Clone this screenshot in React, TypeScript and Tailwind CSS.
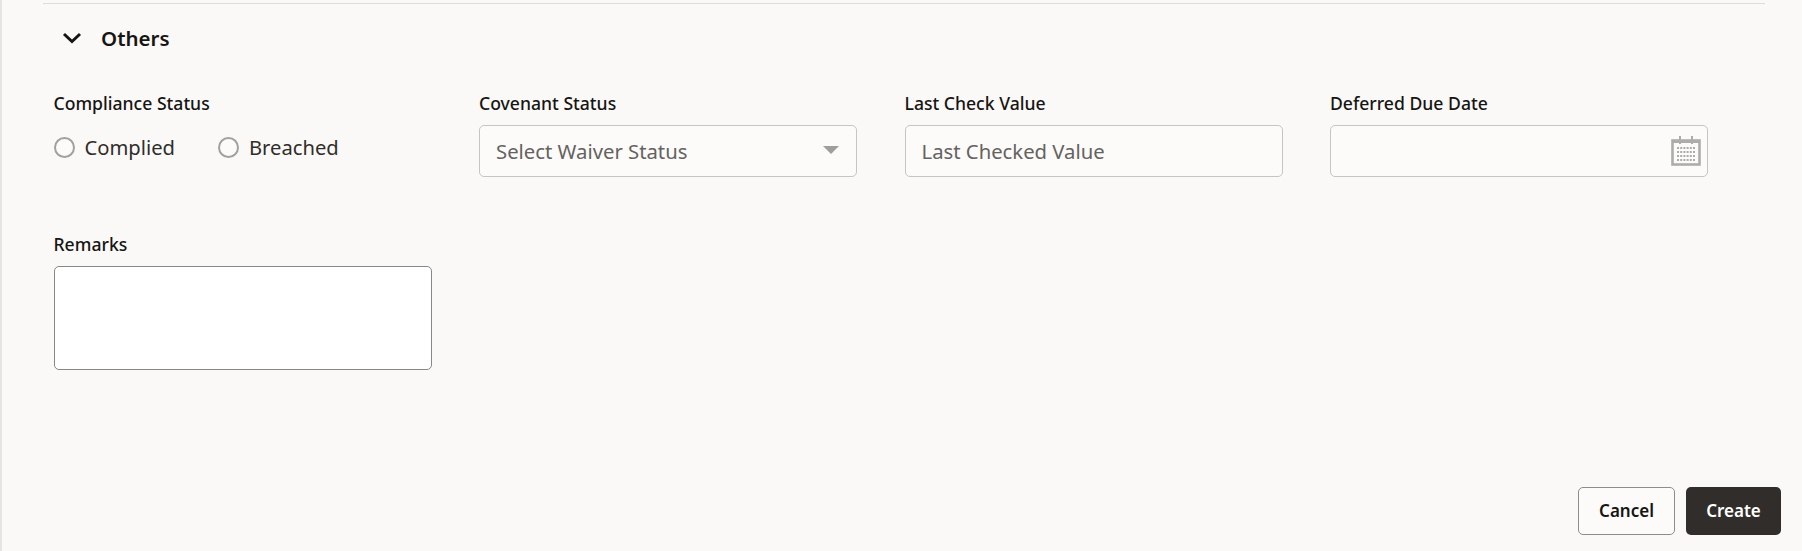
import React from 'react';

const font = "[font-family:'Noto_Sans','Open_Sans',sans-serif]";

const Label: React.FC<{ text: string }> = ({ text }) => (
  <div className="h-[22px] text-[17.6px] leading-[22px] font-medium text-[#161513]">{text}</div>
);

const Radio: React.FC<{ text: string }> = ({ text }) => (
  <label className="flex items-center gap-[10px]">
    <span className="size-[21px] rounded-full border-2 border-[#a3a09c] bg-[#fcfbfa]" />
    <span className="text-[20.2px] leading-[28px] text-[#312d2a]">{text}</span>
  </label>
);

const CalendarIcon = () => (
  <svg width="30" height="30" viewBox="0 0 30 30" className="text-[#aeaca9]">
    <rect x="1.5" y="4.5" width="27" height="24" fill="none" stroke="currentColor" strokeWidth="2.6" />
    <rect x="1" y="4" width="28" height="3" fill="currentColor" />
    <rect x="8" y="0" width="2" height="8" fill="currentColor" />
    <rect x="20" y="0" width="2" height="8" fill="currentColor" />
    <path d="M6 12h18M6 16h18M6 20h18M6 24h18" stroke="currentColor" strokeWidth="2" strokeDasharray="2 1.2" fill="none" />
  </svg>
);

const App: React.FC = () => {
  return (
    <div className={`h-[551px] w-[1802px] overflow-hidden border-l-2 border-[#e6e4e1] bg-[#faf9f7] ${font}`}>
      <div className="ml-[41px] mr-[37px] mt-[3px] border-t border-[#dfdddb] pt-[18px]">
        <div className="flex h-[32px] items-center pl-[19px]">
          <svg width="20" height="12" viewBox="0 0 20 12" fill="none" stroke="#161513" strokeWidth="3">
            <path d="M2 2l8 7.5L18 2" />
          </svg>
          <span className="ml-[19px] text-[20.5px] leading-[32px] font-semibold text-[#161513]">Others</span>
        </div>

        <div className="mt-[38px] grid grid-cols-[repeat(4,378px)] gap-x-[47.5px] pl-[10.5px]">
          <div>
            <Label text="Compliance Status" />
            <div className="mt-[19px] flex gap-[43px]">
              <Radio text="Complied" />
              <Radio text="Breached" />
            </div>
          </div>
          <div>
            <Label text="Covenant Status" />
            <div className="mt-[11px] flex h-[52px] items-center justify-between rounded-[5px] border border-[#c7c5c2] bg-[#fcfbfa] pl-[16px] pr-[17px]">
              <span className="text-[20.3px] text-[#65625f]">Select Waiver Status</span>
              <span className="mb-[3px] h-0 w-0 border-x-[8px] border-t-[8px] border-x-transparent border-t-[#a09e9b]" />
            </div>
          </div>
          <div>
            <Label text="Last Check Value" />
            <div className="mt-[11px] flex h-[52px] items-center rounded-[5px] border border-[#c7c5c2] bg-[#fcfbfa] pl-[16px]">
              <span className="text-[20.3px] text-[#65625f]">Last Checked Value</span>
            </div>
          </div>
          <div>
            <Label text="Deferred Due Date" />
            <div className="mt-[11px] flex h-[52px] items-center justify-end rounded-[5px] border border-[#c7c5c2] bg-[#fcfbfa] pr-[6px]">
              <CalendarIcon />
            </div>
          </div>
        </div>

        <div className="mt-[56px] pl-[10.5px]">
          <Label text="Remarks" />
          <div className="mt-[11px] h-[104px] w-[378px] rounded-[5px] border border-[#8a8886] bg-white" />
        </div>

        <div className="mt-[117px] mr-[-16px] flex justify-end gap-[11px]">
          <button className="h-[48px] w-[97px] rounded-[5px] border border-[#8f8c89] bg-[#fcfbfa] text-[17px] font-semibold text-[#161513]">Cancel</button>
          <button className="h-[48px] w-[95px] rounded-[5px] bg-[#312d2a] text-[17px] font-semibold text-white">Create</button>
        </div>
      </div>
    </div>
  );
};

export default App;
